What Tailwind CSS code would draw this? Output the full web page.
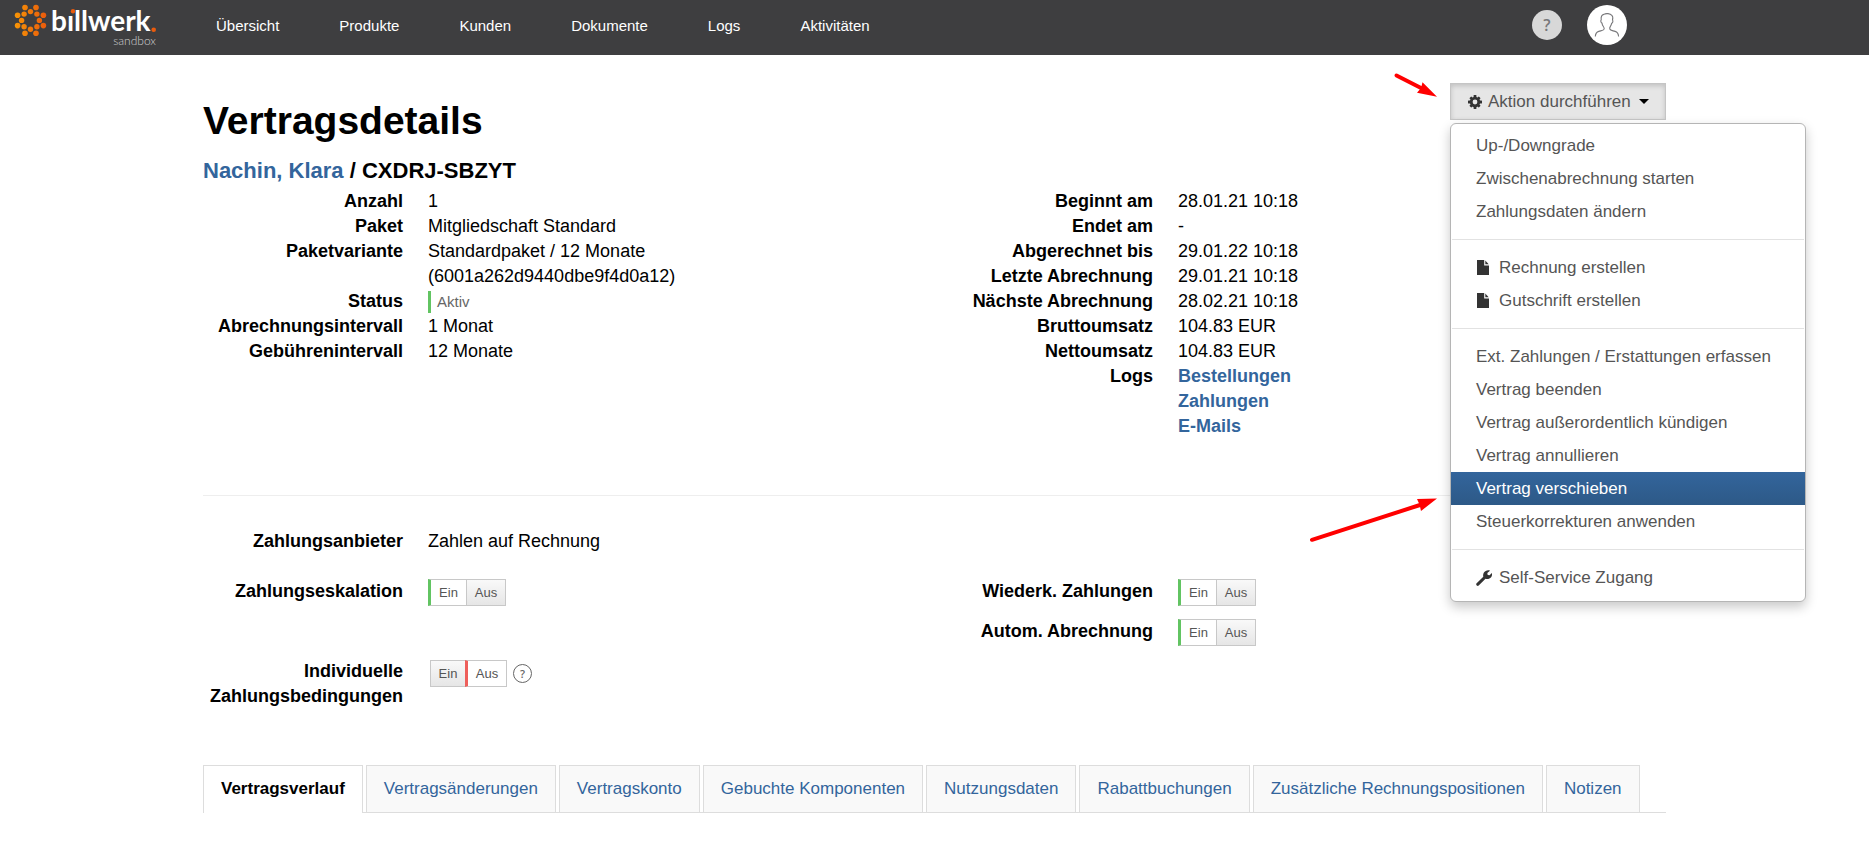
<!DOCTYPE html>
<html lang="de">
<head>
<meta charset="utf-8">
<title>billwerk – Vertragsdetails</title>
<script src="https://cdn.jsdelivr.net/npm/@tailwindcss/browser@4"></script>
</head>
<body class="relative bg-white font-['Liberation_Sans',Arial,sans-serif] text-[18px] leading-[25px] text-black">

<svg width="0" height="0" class="absolute" aria-hidden="true">
  <defs>
    <symbol id="file" viewBox="0 0 12 15">
      <path fill="#333" d="M0 0h7.2v5.4H12V15H0z"/>
      <path fill="#333" d="M8.3.6 11.7 4.3H8.3z"/>
    </symbol>
  </defs>
</svg>

<header class="flex h-[55px] items-start bg-[#3e3e40] text-white">
  <a href="#" class="ml-[13px] w-[150px] shrink-0" aria-label="billwerk sandbox">
    <svg width="150" height="50" viewBox="13 0 150 50">
      <defs>
        <linearGradient id="sun" gradientUnits="userSpaceOnUse" x1="15" y1="0" x2="46" y2="0">
          <stop offset="0" stop-color="#f79406"/><stop offset="1" stop-color="#ea5b0c"/>
        </linearGradient>
      </defs>
      <g fill="url(#sun)">
        <circle cx="25" cy="7.5" r="2.8"/><circle cx="36" cy="7.5" r="2.8"/>
        <circle cx="17.6" cy="15.2" r="2.8"/><circle cx="43.4" cy="15.2" r="2.8"/>
        <circle cx="17.6" cy="25.6" r="2.8"/><circle cx="43.4" cy="25.6" r="2.8"/>
        <circle cx="25" cy="33.2" r="2.8"/><circle cx="36" cy="33.2" r="2.8"/>
        <circle cx="30.5" cy="11.6" r="2.7"/><circle cx="24.1" cy="14.1" r="2.7"/>
        <circle cx="36.9" cy="14.1" r="2.7"/><circle cx="21.6" cy="20.4" r="2.7"/>
        <circle cx="39.4" cy="20.4" r="2.7"/><circle cx="24.1" cy="26.7" r="2.7"/>
        <circle cx="36.9" cy="26.7" r="2.7"/><circle cx="30.5" cy="29.2" r="2.7"/>
      </g>
      <text x="51" y="31" font-family="Lato, sans-serif" font-weight="700" font-size="28" fill="#fff">bıllwerk</text>
      <circle cx="73" cy="11.3" r="2.2" fill="#ea5b0c"/>
      <circle cx="153.700" cy="29.8" r="2.3" fill="#ea5b0c"/>
      <text x="156" y="45" text-anchor="end" font-family="Lato, sans-serif" font-weight="300" font-size="12" fill="#d0d0d0">sandbox</text>
    </svg>
  </a>
  <nav class="ml-[53px] flex gap-[60px] pt-[13px] text-[15px]">
    <a href="#">Übersicht</a><a href="#">Produkte</a><a href="#">Kunden</a><a href="#">Dokumente</a><a href="#">Logs</a><a href="#">Aktivitäten</a>
  </nav>
  <div class="mr-[242px] ml-auto flex items-center gap-[25px] pt-[5px]">
    <button type="button" aria-label="Hilfe" class="flex size-[30px] items-center justify-center rounded-full bg-[#d8d8d8] font-['Open_Sans',sans-serif] text-[16px] font-semibold text-[#77777a]">?</button>
    <button type="button" aria-label="Benutzerkonto" class="size-10 rounded-full bg-white">
      <svg width="40" height="40" viewBox="0 0 40 40" fill="none" stroke="#77777a" stroke-width="1.1">
        <path d="M8.3 31.5c.2-3 .9-4.300 3.500-5.100 3-.9 5.200-1.100 5.400-2.400.1-1-.3-1.700-1-2.700-.7-1-1-2-1.200-3.200-1.100-.3-1.600-2.300-.8-3.200-.4-3.500.6-5.100 2.600-5.500 2.300-1.400 6.400-.9 8 1 1.400 1.100 1.100 3 .7 4.600.8 1 .3 2.900-.8 3.200-.2 1.200-.6 2.200-1.300 3.200-.6.9-.9 1.700-.6 2.600.4 1.400 2.400 1.500 5.300 2.400 2.600.8 3.300 2.100 3.500 5.100"/>
      </svg>
    </button>
  </div>
</header>

<main class="relative mx-auto w-full max-w-[1463px]">
  <div class="flex items-start justify-between pt-7">
    <div class="pt-4">
      <h1 class="text-[39px] leading-[44px] font-bold">Vertragsdetails</h1>
      <h2 class="mt-[13px] text-[22px] leading-[30px] font-bold"><a href="#" class="text-[#33659c]">Nachin, Klara</a> / CXDRJ-SBZYT</h2>
    </div>
    <div class="relative w-[216px]">
      <button type="button" aria-haspopup="menu" aria-expanded="true" class="flex h-[37px] w-full items-center border border-[#c5c5c5] bg-[#e6e6e6] pl-[17px] text-[17px] text-[#555] shadow-[inset_0_2px_5px_rgba(0,0,0,0.16)]">
        <svg width="14" height="14" viewBox="0 0 14 14" class="mr-[6px]">
          <g fill="#333"><rect x="5.600" y="0" width="2.800" height="14" rx=".5"/><rect x="0" y="5.600" width="14" height="2.800" rx=".5"/><rect x="5.600" y=".3" width="2.800" height="13.400" rx=".5" transform="rotate(45 7 7)"/><rect x="5.600" y=".3" width="2.800" height="13.400" rx=".5" transform="rotate(-45 7 7)"/><circle cx="7" cy="7" r="5.200"/></g>
          <circle cx="7" cy="7" r="2.400" fill="#e6e6e6"/>
        </svg>
        <span>Aktion durchführen</span>
        <svg width="10" height="5" viewBox="0 0 10 5" class="ml-2"><path d="M0 0h10L5 5z"/></svg>
      </button>
      <ul role="menu" class="absolute top-10 left-0 z-10 w-[356px] rounded-[6px] border border-[#b5b5b5] bg-white pt-[5px] pb-[7px] text-[17px] leading-[33px] text-[#555] shadow-[0_5px_12px_rgba(0,0,0,0.22)]">
        <li><a role="menuitem" href="#" class="block px-[25px]">Up-/Downgrade</a></li>
        <li><a role="menuitem" href="#" class="block px-[25px]">Zwischenabrechnung starten</a></li>
        <li><a role="menuitem" href="#" class="block px-[25px]">Zahlungsdaten ändern</a></li>
        <li role="separator" class="mx-px my-[11px] h-px bg-[#e2e2e2]"></li>
        <li><a role="menuitem" href="#" class="flex items-center gap-[10px] px-[25px]"><svg width="12" height="15" class="ml-px"><use href="#file"/></svg>Rechnung erstellen</a></li>
        <li><a role="menuitem" href="#" class="flex items-center gap-[10px] px-[25px]"><svg width="12" height="15" class="ml-px"><use href="#file"/></svg>Gutschrift erstellen</a></li>
        <li role="separator" class="mx-px my-[11px] h-px bg-[#e2e2e2]"></li>
        <li><a role="menuitem" href="#" class="block px-[25px]">Ext. Zahlungen / Erstattungen erfassen</a></li>
        <li><a role="menuitem" href="#" class="block px-[25px]">Vertrag beenden</a></li>
        <li><a role="menuitem" href="#" class="block px-[25px]">Vertrag außerordentlich kündigen</a></li>
        <li><a role="menuitem" href="#" class="block px-[25px]">Vertrag annullieren</a></li>
        <li><a role="menuitem" href="#" class="block bg-linear-to-b from-[#33659c] to-[#2d5987] px-[25px] text-white">Vertrag verschieben</a></li>
        <li><a role="menuitem" href="#" class="block px-[25px]">Steuerkorrekturen anwenden</a></li>
        <li role="separator" class="mx-px my-[11px] h-px bg-[#e2e2e2]"></li>
        <li><a role="menuitem" href="#" class="flex items-center gap-[7px] px-[25px]"><svg width="16" height="16" viewBox="0 0 16 16"><path fill="#333" d="M.4 13.400 7.300 6.800C6.700 4.400 7.600 2 9.700.9 11 .3 12.800.1 14 .7L11.300 3l.4 1.900 1.900.4L15.800 3c.5 1.400.2 3-.7 4.200-1.300 1.700-3.700 2.200-5.600 1.500L2.700 15.500c-.5.5-1.400.5-1.900 0-.6-.5-.8-1.500-.4-2.100z"/></svg>Self-Service Zugang</a></li>
      </ul>
    </div>
  </div>

  <section class="grid grid-cols-2 gap-x-[37px] pt-[3px]">
    <dl class="grid grid-cols-[200px_1fr] content-start gap-x-[25px]">
      <dt class="text-right font-bold">Anzahl</dt><dd>1</dd>
      <dt class="text-right font-bold">Paket</dt><dd>Mitgliedschaft Standard</dd>
      <dt class="text-right font-bold">Paketvariante</dt><dd>Standardpaket / 12 Monate<br>(6001a262d9440dbe9f4d0a12)</dd>
      <dt class="text-right font-bold">Status</dt><dd class="flex items-center"><span class="border-l-3 border-[#62c462] pl-[6px] text-[15px] leading-[22px] text-[#666]">Aktiv</span></dd>
      <dt class="text-right font-bold">Abrechnungsintervall</dt><dd>1 Monat</dd>
      <dt class="text-right font-bold">Gebührenintervall</dt><dd>12 Monate</dd>
    </dl>
    <dl class="grid grid-cols-[200px_1fr] content-start gap-x-[25px]">
      <dt class="text-right font-bold">Beginnt am</dt><dd>28.01.21 10:18</dd>
      <dt class="text-right font-bold">Endet am</dt><dd>-</dd>
      <dt class="text-right font-bold">Abgerechnet bis</dt><dd>29.01.22 10:18</dd>
      <dt class="text-right font-bold">Letzte Abrechnung</dt><dd>29.01.21 10:18</dd>
      <dt class="text-right font-bold">Nächste Abrechnung</dt><dd>28.02.21 10:18</dd>
      <dt class="text-right font-bold">Bruttoumsatz</dt><dd>104.83 EUR</dd>
      <dt class="text-right font-bold">Nettoumsatz</dt><dd>104.83 EUR</dd>
      <dt class="text-right font-bold">Logs</dt>
      <dd class="flex flex-col items-start font-bold text-[#33659c]"><a href="#">Bestellungen</a><a href="#">Zahlungen</a><a href="#">E-Mails</a></dd>
    </dl>
  </section>

  <hr class="mt-14 border-[#eee]">

  <section class="grid grid-cols-2 gap-x-[37px] pt-[33px]">
    <div class="grid grid-cols-[200px_1fr] content-start gap-x-[25px]">
      <div class="text-right font-bold">Zahlungsanbieter</div><div>Zahlen auf Rechnung</div>
      <div id="l1" class="mt-[25px] text-right font-bold">Zahlungseskalation</div>
      <div role="radiogroup" aria-labelledby="l1" class="relative mt-[25px] flex h-[27px] text-[13px] leading-[25px] text-[#555]">
        <label class="w-[38px] border-y border-l-3 border-y-[#c8c8c8] border-l-[#62c462] bg-white text-center"><input type="radio" name="esk" checked class="sr-only">Ein</label>
        <label class="w-10 border border-[#c8c8c8] bg-linear-to-b from-[#f9f9f9] to-[#e6e6e6] text-center"><input type="radio" name="esk" class="sr-only">Aus</label>
      </div>
      <div id="l2" class="mt-[53px] text-right font-bold">Individuelle Zahlungsbedingungen</div>
      <div class="mt-[54px] ml-[2px] flex items-start gap-[6px]">
        <div role="radiogroup" aria-labelledby="l2" class="relative flex h-[27px] text-[13px] leading-[25px] text-[#555]">
          <label class="w-[35px] border-y border-l border-[#c8c8c8] bg-linear-to-b from-[#f9f9f9] to-[#e6e6e6] text-center"><input type="radio" name="ind" class="sr-only">Ein</label>
          <label class="w-[42px] border-y border-r border-l-3 border-y-[#c8c8c8] border-r-[#c8c8c8] border-l-[#ee5f5b] bg-white text-center"><input type="radio" name="ind" checked class="sr-only">Aus</label>
        </div>
        <button type="button" aria-label="Hilfe zu Zahlungsbedingungen" class="mt-1 flex size-[19px] items-center justify-center rounded-full border border-[#666] font-['Open_Sans',sans-serif] text-[11px] leading-none font-semibold text-[#666]">?</button>
      </div>
    </div>
    <div class="grid grid-cols-[200px_1fr] content-start gap-x-[25px] gap-y-[13px] pt-[50px]">
      <div id="l3" class="text-right font-bold">Wiederk. Zahlungen</div>
      <div role="radiogroup" aria-labelledby="l3" class="relative flex h-[27px] text-[13px] leading-[25px] text-[#555]">
        <label class="w-[38px] border-y border-l-3 border-y-[#c8c8c8] border-l-[#62c462] bg-white text-center"><input type="radio" name="wdk" checked class="sr-only">Ein</label>
        <label class="w-10 border border-[#c8c8c8] bg-linear-to-b from-[#f9f9f9] to-[#e6e6e6] text-center"><input type="radio" name="wdk" class="sr-only">Aus</label>
      </div>
      <div id="l4" class="text-right font-bold">Autom. Abrechnung</div>
      <div role="radiogroup" aria-labelledby="l4" class="relative flex h-[27px] text-[13px] leading-[25px] text-[#555]">
        <label class="w-[38px] border-y border-l-3 border-y-[#c8c8c8] border-l-[#62c462] bg-white text-center"><input type="radio" name="aut" checked class="sr-only">Ein</label>
        <label class="w-10 border border-[#c8c8c8] bg-linear-to-b from-[#f9f9f9] to-[#e6e6e6] text-center"><input type="radio" name="aut" class="sr-only">Aus</label>
      </div>
    </div>
  </section>

  <nav class="mt-14 flex gap-[3px] border-b border-[#ddd] text-[17px] leading-[46px] whitespace-nowrap text-[#33659c]">
    <a href="#" aria-current="page" class="-mb-px border-x border-t border-[#ddd] bg-white px-[17px] pb-px font-bold text-black">Vertragsverlauf</a>
    <a href="#" class="border-x border-t border-[#ddd] bg-[#f9f9f9] px-[17px]">Vertragsänderungen</a>
    <a href="#" class="border-x border-t border-[#ddd] bg-[#f9f9f9] px-[17px]">Vertragskonto</a>
    <a href="#" class="border-x border-t border-[#ddd] bg-[#f9f9f9] px-[17px]">Gebuchte Komponenten</a>
    <a href="#" class="border-x border-t border-[#ddd] bg-[#f9f9f9] px-[17px]">Nutzungsdaten</a>
    <a href="#" class="border-x border-t border-[#ddd] bg-[#f9f9f9] px-[17px]">Rabattbuchungen</a>
    <a href="#" class="border-x border-t border-[#ddd] bg-[#f9f9f9] px-[17px]">Zusätzliche Rechnungspositionen</a>
    <a href="#" class="border-x border-t border-[#ddd] bg-[#f9f9f9] px-[17px]">Notizen</a>
  </nav>

  <!-- Annotation arrows over the page -->
  <svg class="absolute top-[15px] right-[226px]" width="50" height="32" viewBox="1390 70 50 32" aria-hidden="true">
    <path d="M1396.500 75.500 1422 88.500" stroke="#f00" stroke-width="4" stroke-linecap="round"/>
    <path fill="#f00" d="M1437 96.800 1417 92.800 1421 88 1422.500 82.200z"/>
  </svg>
  <svg class="absolute top-[437px] right-[226px]" width="134" height="55" viewBox="1306 492 134 55" aria-hidden="true">
    <path d="M1312 539.800 1420 505" stroke="#f00" stroke-width="4" stroke-linecap="round"/>
    <path fill="#f00" d="M1437 498.600 1417 499 1419.500 504.500 1421 511z"/>
  </svg>
</main>
</body>
</html>
